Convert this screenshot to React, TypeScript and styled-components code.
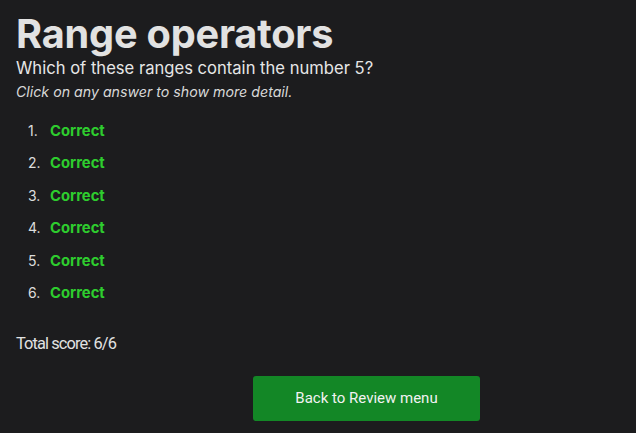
import React from "react";
import styled, { createGlobalStyle } from "styled-components";

const Global = createGlobalStyle`
  html, body { margin: 0; padding: 0; background: #1c1c1e; }
  body { font-family: Inter, "Noto Sans", sans-serif; color: #e2e2e2; }
`;

const Page = styled.div`
  padding: 12px 16px 0 16px;
  display: flex;
  flex-direction: column;
`;

const Title = styled.h1`
  margin: 0;
  font-size: 39.7px;
  font-weight: 700;
  line-height: 45px;
  letter-spacing: -0.2px;
  color: #e2e2e2;
`;

const Question = styled.div`
  font-size: 16.6px;
  line-height: 22px;
  color: #e6e6e6;
`;

const Hint = styled.div`
  margin-top: 3px;
  font-size: 14.2px;
  font-style: italic;
  line-height: 20px;
  color: #d8d8d8;
`;

const List = styled.ol`
  margin: 19px 0 0 0;
  padding: 0 0 0 12px;
  list-style: none;
  counter-reset: answer;
  display: flex;
  flex-direction: column;
  gap: 12.4px;
`;

const Item = styled.li`
  counter-increment: answer;
  display: flex;
  font-size: 14px;
  line-height: 20px;
  color: #dcdcdc;
  &::before {
    content: counter(answer) ".";
    width: 22px;
    font-weight: 400;
    color: #dcdcdc;
  }
`;

const Verdict = styled.span<{ $ok: boolean }>`
  font-size: 14.8px;
  font-weight: 700;
  color: ${(p) => (p.$ok ? "#2ecc2e" : "#e04040")};
`;

const Score = styled.div`
  margin-top: 30px;
  font-family: Roboto, sans-serif;
  font-size: 16.4px;
  letter-spacing: -0.9px;
  line-height: 22px;
  color: #e2e2e2;
`;

const ButtonRow = styled.div`
  margin-top: 21px;
  padding-left: 237px;
`;

const Button = styled.button`
  width: 227px;
  height: 45px;
  border: none;
  border-radius: 3px;
  background: #138726;
  color: #f2f2f2;
  font-family: Roboto, sans-serif;
  font-size: 15px;
  cursor: pointer;
`;

export default function App() {
  const results = [true, true, true, true, true, true];
  return (
    <>
      <Global />
      <Page>
        <Title>Range operators</Title>
        <Question>Which of these ranges contain the number 5?</Question>
        <Hint>Click on any answer to show more detail.</Hint>
        <List>
          {results.map((ok, i) => (
            <Item key={i}>
              <Verdict $ok={ok}>{ok ? "Correct" : "Incorrect"}</Verdict>
            </Item>
          ))}
        </List>
        <Score>Total score: 6/6</Score>
        <ButtonRow>
          <Button>Back to Review menu</Button>
        </ButtonRow>
      </Page>
    </>
  );
}
